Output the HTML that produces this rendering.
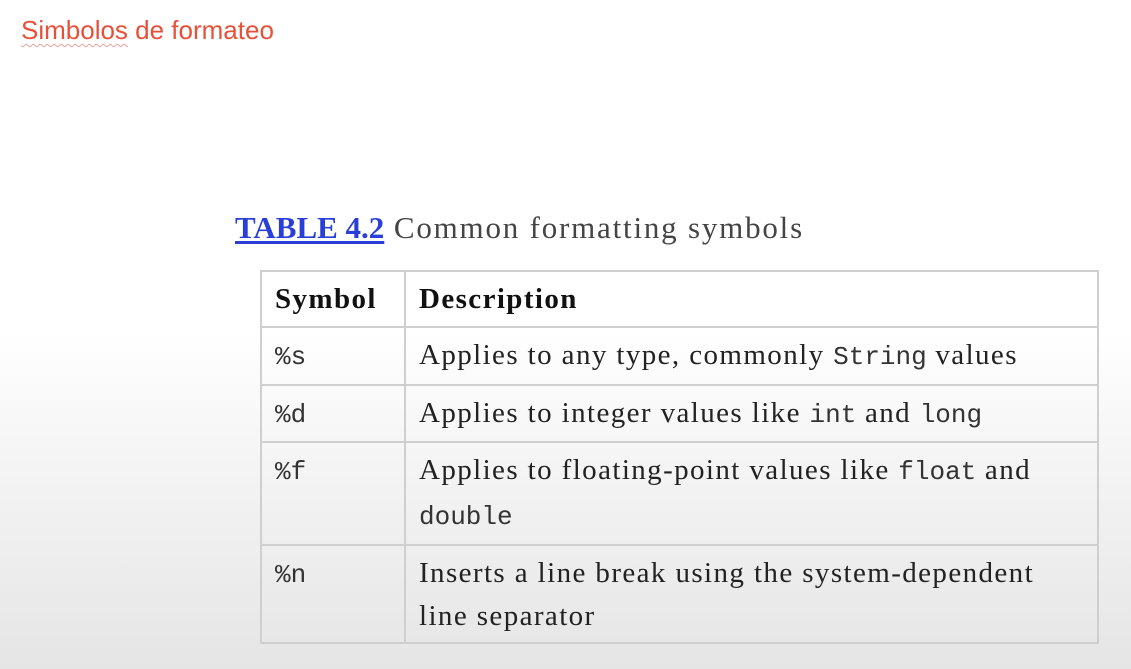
<!DOCTYPE html>
<html><head><style>
html,body{margin:0;padding:0}
body{width:1131px;height:669px;position:relative;overflow:hidden;
background:linear-gradient(to bottom,#fff 0px,#fff 330px,#f3f3f3 480px,#e5e5e5 669px);
font-family:"Liberation Serif",serif;color:#222}
.t{position:absolute;left:21px;top:15px;font-family:"Liberation Sans",sans-serif;font-size:26px;color:#e8503a}
.t u{text-decoration:underline wavy #e8a0a0;text-decoration-thickness:1px;text-underline-offset:4px}
.cap{position:absolute;left:235px;top:210px;font-size:31px;color:#444;white-space:nowrap;letter-spacing:1.8px}
.cap b{color:#2a3fd8;text-decoration:underline;text-underline-offset:3px;letter-spacing:0}
table{position:absolute;left:260px;top:270px;width:839px;border-collapse:collapse;font-size:29px;letter-spacing:1.4px}
td{border:2px solid #cfcfcf;padding:6px 13px 0;vertical-align:top;line-height:43px;white-space:nowrap}
td:first-child{width:116px}
tr.h td{height:54px;padding-top:0;vertical-align:middle;font-weight:bold;color:#111}
code{font-family:"Liberation Mono",monospace;font-size:26px;color:#333;letter-spacing:0}
</style></head><body>
<div class="t"><u>Simbolos</u> de formateo</div>
<div class="cap"><b>TABLE 4.2</b> Common formatting symbols</div>
<table>
<tr class="h"><td>Symbol</td><td>Description</td></tr>
<tr><td style="height:50px"><code>%s</code></td><td>Applies to any type, commonly <code>String</code> values</td></tr>
<tr><td style="height:49px"><code>%d</code></td><td>Applies to integer values like <code>int</code> and <code>long</code></td></tr>
<tr><td style="height:95px"><code>%f</code></td><td>Applies to floating-point values like <code>float</code> and<br><code>double</code></td></tr>
<tr><td style="height:90px"><code>%n</code></td><td>Inserts a line break using the system-dependent<br>line separator</td></tr>
</table>
</body></html>
